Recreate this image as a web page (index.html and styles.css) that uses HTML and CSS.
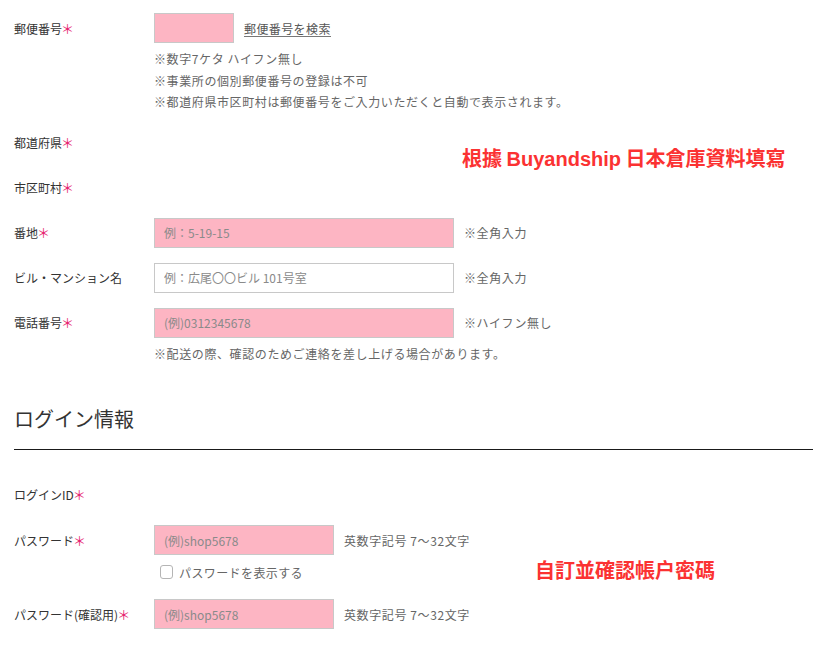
FILE: index.html
```html
<!DOCTYPE html>
<html lang="ja">
<head>
<meta charset="utf-8">
<link rel="stylesheet" href="styles.css">
</head>
<body>
<div class="page">
  <div class="form">
    <div class="row">
      <div class="label">郵便番号<span class="req">＊</span></div>
      <div class="field">
        <div class="line">
          <input class="input input-zip pink" type="text">
          <a class="link">郵便番号を検索</a>
        </div>
        <div class="notes">
          <p>※数字7ケタ ハイフン無し</p>
          <p>※事業所の個別郵便番号の登録は不可</p>
          <p>※都道府県市区町村は郵便番号をご入力いただくと自動で表示されます。</p>
        </div>
      </div>
    </div>
    <div class="row">
      <div class="label">都道府県<span class="req">＊</span></div>
    </div>
    <div class="row">
      <div class="label">市区町村<span class="req">＊</span></div>
    </div>
    <div class="row">
      <div class="label">番地<span class="req">＊</span></div>
      <div class="field">
        <div class="line">
          <input class="input input-wide pink" type="text" placeholder="例：5-19-15">
          <span class="hint">※全角入力</span>
        </div>
      </div>
    </div>
    <div class="row">
      <div class="label">ビル・マンション名</div>
      <div class="field">
        <div class="line">
          <input class="input input-wide" type="text" placeholder="例：広尾〇〇ビル 101号室">
          <span class="hint">※全角入力</span>
        </div>
      </div>
    </div>
    <div class="row">
      <div class="label">電話番号<span class="req">＊</span></div>
      <div class="field">
        <div class="line">
          <input class="input input-wide pink" type="text" placeholder="(例)0312345678">
          <span class="hint">※ハイフン無し</span>
        </div>
        <div class="notes">
          <p>※配送の際、確認のためご連絡を差し上げる場合があります。</p>
        </div>
      </div>
    </div>
  </div>

  <h2 class="section-title">ログイン情報</h2>

  <div class="form form-login">
    <div class="row">
      <div class="label">ログインID<span class="req">＊</span></div>
    </div>
    <div class="row">
      <div class="label">パスワード<span class="req">＊</span></div>
      <div class="field">
        <div class="line">
          <input class="input input-mid pink" type="text" placeholder="(例)shop5678">
          <span class="hint">英数字記号 7〜32文字</span>
        </div>
        <label class="check">
          <span class="box"></span>
          <span>パスワードを表示する</span>
        </label>
      </div>
    </div>
    <div class="row">
      <div class="label">パスワード(確認用)<span class="req">＊</span></div>
      <div class="field">
        <div class="line">
          <input class="input input-mid pink" type="text" placeholder="(例)shop5678">
          <span class="hint">英数字記号 7〜32文字</span>
        </div>
      </div>
    </div>
  </div>

  <div class="note-red note-1">根據 <span class="latin">Buyandship</span> 日本倉庫資料填寫</div>
  <div class="note-red note-2">自訂並確認帳户密碼</div>
</div>
</body>
</html>
```

FILE: styles.css
```css
* { box-sizing: border-box; }
html, body { margin: 0; padding: 0; background: #fff; }
body {
  font-family: "Noto Sans CJK JP", "Noto Sans", sans-serif;
  font-size: 12px;
  color: #333;
}
p { margin: 0; }
.page {
  position: relative;
  padding: 13px 21px 0 14px;
}
.form {
  display: flex;
  flex-direction: column;
  gap: 15px;
}
.form-login {
  margin-top: 29px;
  gap: 16px;
}
.row {
  display: flex;
  align-items: flex-start;
}
.label {
  width: 140px;
  height: 30px;
  display: flex;
  align-items: center;
  flex-shrink: 0;
  color: #333;
}
.req {
  color: #e6246f;
  font-size: 13px;
  margin-left: -1px;
}
.field {
  display: flex;
  flex-direction: column;
}
.line {
  display: flex;
  align-items: center;
  gap: 10px;
  height: 30px;
}
.input {
  height: 30px;
  border: 1px solid #c8c8c8;
  background: #fff;
  padding: 0 9px;
  font-family: inherit;
  font-size: 12px;
  color: #333;
  outline: none;
  margin: 0;
}
.input::placeholder { color: #8a8a8a; }
.pink { background: #fdb5c3; }
.input-zip { width: 80px; }
.input-wide { width: 300px; }
.input-mid { width: 180px; }
.link {
  color: #555;
  text-decoration: none;
  border-bottom: 1px solid #777;
  letter-spacing: 0.4px;
  line-height: 15px;
  margin-top: 2px;
}
.hint {
  color: #666;
  letter-spacing: 0.6px;
}
.notes {
  margin-top: 5px;
  line-height: 21.5px;
  color: #666;
  letter-spacing: 0.6px;
}
.section-title {
  margin: 40px 0 0;
  font-size: 20px;
  font-weight: 400;
  line-height: 30px;
  color: #333;
  padding-bottom: 15px;
  border-bottom: 1px solid #1a1a1a;
}
.check {
  display: flex;
  align-items: center;
  gap: 6px;
  margin-top: 6px;
  height: 22px;
  padding-left: 6px;
  color: #666;
  letter-spacing: 0.4px;
}
.box {
  width: 13px;
  height: 14px;
  border: 1px solid #b5b5b5;
  border-radius: 3px;
  background: #fff;
}
.note-red {
  position: absolute;
  color: #fb3232;
  font-family: "Noto Sans CJK TC", "Noto Sans", sans-serif;
  font-weight: 700;
  font-size: 20px;
  line-height: 24px;
  white-space: nowrap;
}
.latin {
  font-family: "Liberation Sans", Arial, sans-serif;
}
.note-1 { left: 462px; top: 146px; }
.note-2 { left: 535px; top: 558px; }
```
